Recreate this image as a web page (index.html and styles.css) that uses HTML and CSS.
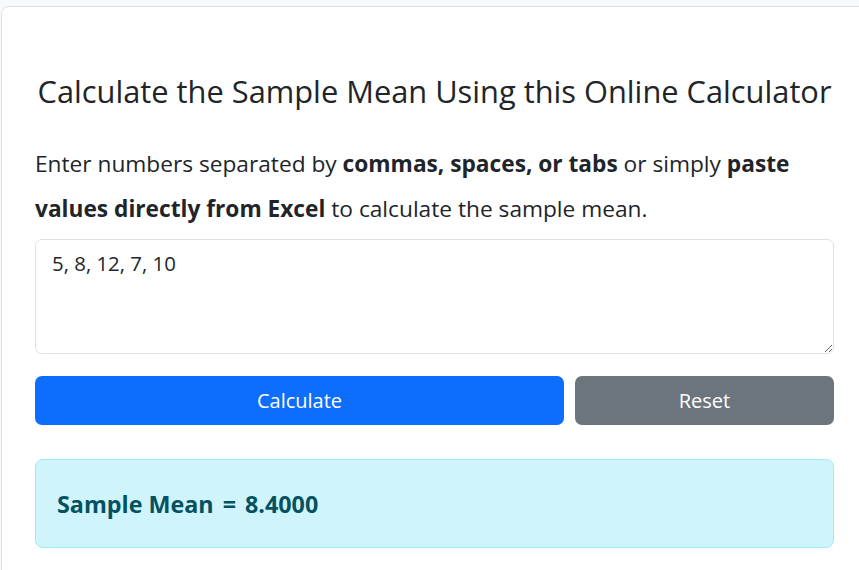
FILE: index.html
```html
<!DOCTYPE html>
<html lang="en">
<head>
<meta charset="utf-8">
<title>Sample Mean Calculator</title>
<link rel="stylesheet" href="styles.css">
</head>
<body>
<div class="card">
  <h1 class="title">Calculate the Sample Mean Using this Online Calculator</h1>
  <p class="lead">Enter numbers separated by <strong>commas, spaces, or tabs</strong> or simply <strong>paste values directly from Excel</strong> to calculate the sample mean.</p>
  <textarea class="data-input">5, 8, 12, 7, 10</textarea>
  <div class="actions">
    <button class="btn btn-primary" type="button">Calculate</button>
    <button class="btn btn-secondary" type="button">Reset</button>
  </div>
  <div class="result">Sample Mean <span class="eq">=</span> 8.4000</div>
</div>
</body>
</html>
```

FILE: styles.css
```css
html, body {
  margin: 0;
  padding: 0;
  overflow: hidden;
  height: 100%;
}
body {
  background: #f8f9fa;
  font-family: "Open Sans", "Noto Sans", sans-serif;
  color: #212529;
}
.card {
  margin: 6px 0 0 1px;
  width: 799px;
  min-height: 600px;
  padding: 66px 33px 20px 33px;
  background: #fff;
  border: 1px solid #dee2e6;
  border-radius: 8px;
}
.title {
  margin: 0;
  font-size: 30.8px;
  line-height: 36px;
  font-weight: 400;
  text-align: center;
  color: #212529;
}
.lead {
  margin: 32px 0 0 0;
  font-size: 22.7px;
  line-height: 45px;
  font-weight: 400;
}
.lead strong {
  font-weight: 700;
}
.data-input {
  display: block;
  box-sizing: border-box;
  width: 100%;
  height: 115px;
  margin-top: 8px;
  padding: 8px 16px;
  font-family: "Open Sans", "Noto Sans", sans-serif;
  font-size: 20.4px;
  line-height: 30px;
  color: #212529;
  border: 1px solid #dee2e6;
  border-radius: 7px;
  resize: vertical;
  outline: none;
}
.actions {
  display: grid;
  grid-template-columns: 529fr 259fr;
  gap: 11px;
  margin-top: 22px;
}
.btn {
  height: 49px;
  border: none;
  border-radius: 7px;
  font-family: "Open Sans", "Noto Sans", sans-serif;
  font-size: 20px;
  color: #fff;
  cursor: pointer;
}
.btn-primary {
  background: #0d6efd;
}
.btn-secondary {
  background: #6c757d;
}
.result {
  display: flex;
  align-items: center;
  white-space: pre;
  box-sizing: border-box;
  height: 89px;
  margin-top: 34px;
  padding: 0 21px;
  background: #cff4fc;
  border: 1px solid #9eeaf9;
  border-radius: 8px;
  color: #055160;
  font-size: 23.3px;
  font-weight: 700;
}
.eq {
  padding: 0 3px;
}
```
